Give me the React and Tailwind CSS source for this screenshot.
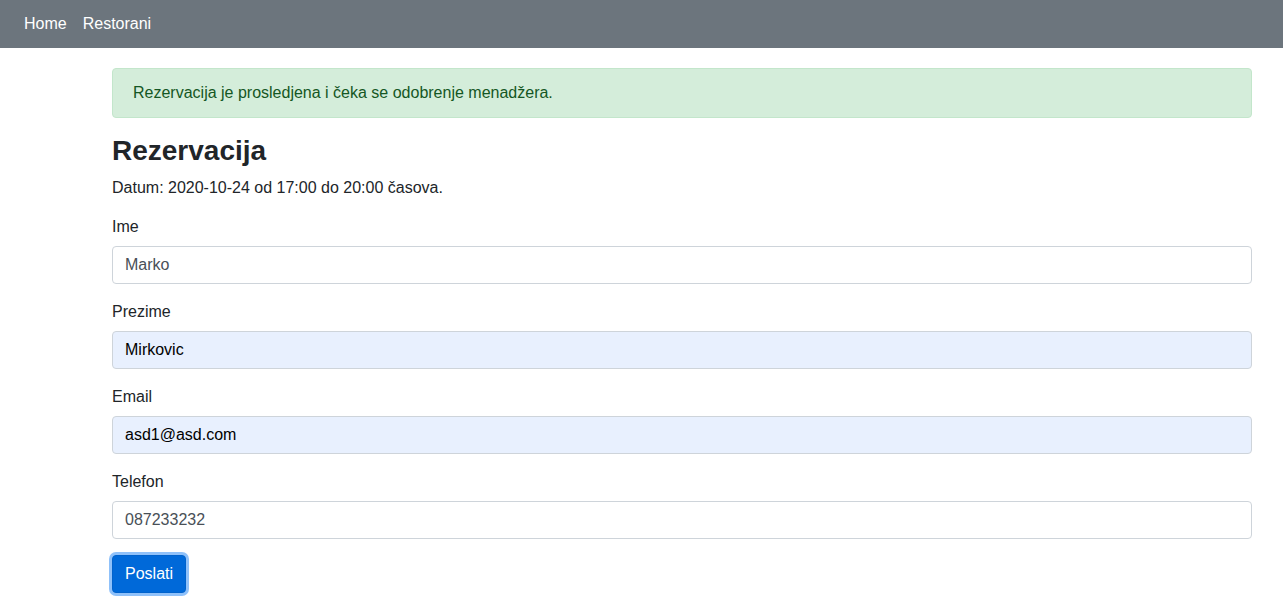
import React from 'react';

const FIELDS = [
  { label: 'Ime', value: 'Marko', filled: false },
  { label: 'Prezime', value: 'Mirkovic', filled: true },
  { label: 'Email', value: 'asd1@asd.com', filled: true },
  { label: 'Telefon', value: '087233232', filled: false },
];

export default function App() {
  return (
    <div className="min-h-screen bg-white text-[#212529] text-base leading-6" style={{ fontFamily: '"Liberation Sans", Arial, sans-serif' }}>
      {/* Navbar */}
      <nav className="h-12 bg-[#6c757d] flex items-center px-4">
        <a className="px-2 text-white">Home</a>
        <a className="px-2 text-white">Restorani</a>
      </nav>

      <div className="pl-[112px] pr-[31px]">
        <div className="mt-5 mb-4 px-5 py-3 rounded border border-[#c3e6cb] bg-[#d4edda] text-[#155724]">
          Rezervacija je prosledjena i čeka se odobrenje menadžera.
        </div>

        <h3 className="text-[28px] leading-[1.2] font-semibold mb-2">Rezervacija</h3>
        <p className="mb-[15px]">Datum: 2020-10-24 od 17:00 do 20:00 časova.</p>

        {FIELDS.map((f) => (
          <div key={f.label} className="mb-4">
            <label className="block mb-[7px]">{f.label}</label>
            <input
              readOnly
              value={f.value}
              className={`block w-full h-[38px] px-3 py-1.5 rounded border border-[#ced4da] outline-none ${f.filled ? 'bg-[#e8f0fe] text-black' : 'bg-white text-[#495057]'}`}
            />
          </div>
        ))}

        <button className="h-[38px] px-3 rounded bg-[#0069d9] border border-[#0062cc] text-white ring-[3px] ring-[#8fc1fa]">
          Poslati
        </button>
      </div>
    </div>
  );
}
